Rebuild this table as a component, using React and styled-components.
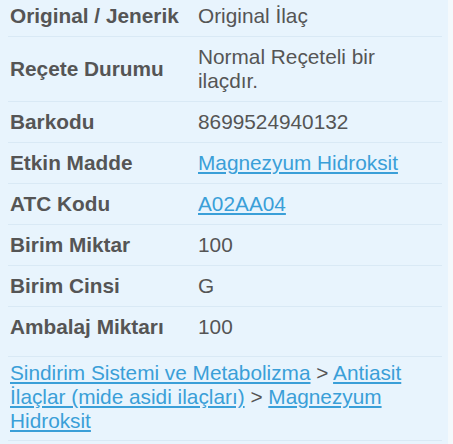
import React from "react";
import styled, { createGlobalStyle } from "styled-components";

const GlobalStyle = createGlobalStyle`
  html, body {
    margin: 0;
    padding: 0;
    background: #f4f9fc;
  }
  body {
    font-family: "Liberation Sans", Arial, sans-serif;
  }
`;

const Panel = styled.div`
  width: 448px;
  box-sizing: border-box;
  background-color: #e8f4fd;
  padding: 0 6px 4px 8px;
  margin-top: -4px;
  color: #555;
  font-size: 20.8px;
  line-height: 24px;
`;

const Table = styled.div`
  display: grid;
  grid-template-columns: 188px 1fr;
  margin-bottom: 9px;
`;

const Cell = styled.div`
  padding: 8px 2px;
  display: flex;
  align-items: center;
  border-bottom: ${(p) => (p.$last ? "none" : "1px solid #d9e9f5")};
  font-weight: ${(p) => (p.$head ? "bold" : "normal")};
`;

const Link = styled.a`
  color: #3a9fd8;
  text-decoration: underline;
  text-underline-offset: 2px;
  cursor: pointer;
`;

const Crumbs = styled.div`
  border-top: 1px solid #d9e9f5;
  border-bottom: 1px solid #d9e9f5;
  padding: 4px 2px 7px;
`;

const rows = [
  { label: "Original / Jenerik", value: "Original İlaç" },
  { label: "Reçete Durumu", value: "Normal Reçeteli bir ilaçdır." },
  { label: "Barkodu", value: "8699524940132" },
  { label: "Etkin Madde", value: "Magnezyum Hidroksit", link: true },
  { label: "ATC Kodu", value: "A02AA04", link: true },
  { label: "Birim Miktar", value: "100" },
  { label: "Birim Cinsi", value: "G" },
  { label: "Ambalaj Miktarı", value: "100" },
];

const App = () => {
  return (
    <>
      <GlobalStyle />
      <Panel>
        <Table>
          {rows.map((r, i) => {
            const last = i === rows.length - 1;
            return (
              <React.Fragment key={r.label}>
                <Cell $head $last={last}>{r.label}</Cell>
                <Cell $last={last}>
                  {r.link ? <Link>{r.value}</Link> : <span>{r.value}</span>}
                </Cell>
              </React.Fragment>
            );
          })}
        </Table>
        <Crumbs>
          <Link>Sindirim Sistemi ve Metabolizma</Link>
          {" > "}
          <Link>Antiasit İlaçlar (mide asidi ilaçları)</Link>
          {" > "}
          <Link>Magnezyum Hidroksit</Link>
        </Crumbs>
      </Panel>
    </>
  );
};

export default App;
